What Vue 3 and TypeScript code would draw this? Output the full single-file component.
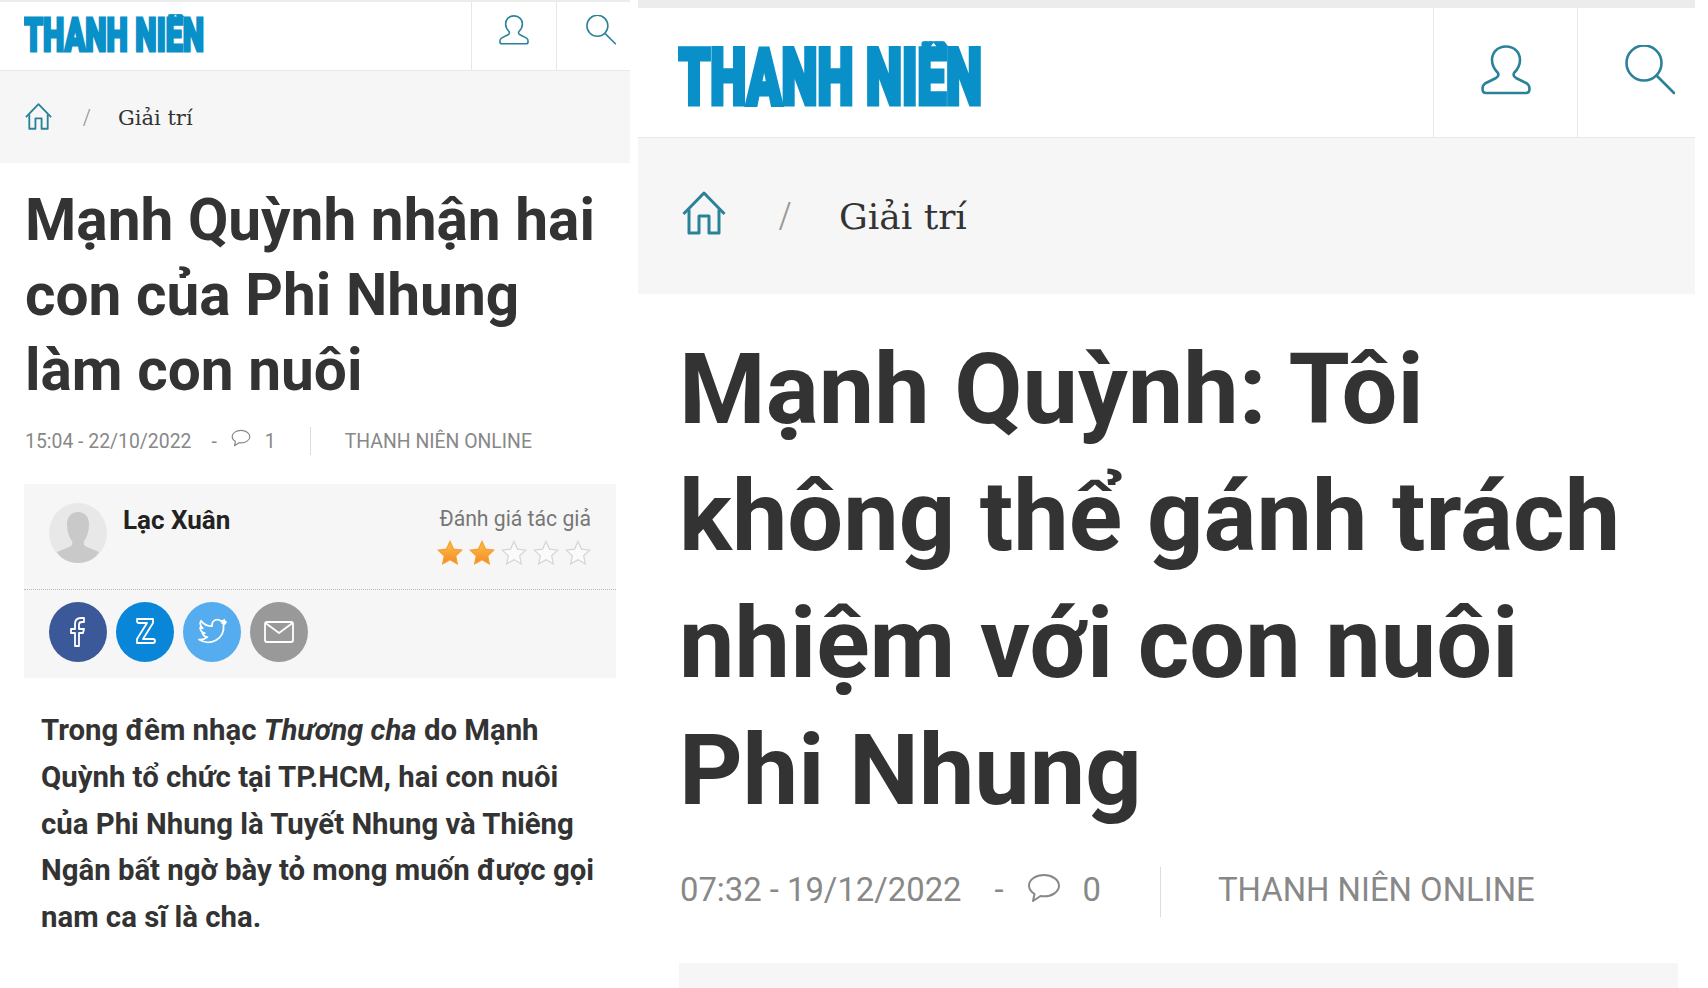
<template>
  <div class="page">
    <!-- bài bên trái -->
    <section class="panel small">
      <header class="topbar">
        <svg class="logo" viewBox="0 0 420 110" preserveAspectRatio="none" aria-label="Thanh Niên">
          <text x="0" y="87" textLength="420" lengthAdjust="spacingAndGlyphs">THANH NIÊN</text>
        </svg>
        <a class="tool"><svg viewBox="0 0 50 50"><use href="#icon-user" /></svg></a>
        <a class="tool"><svg viewBox="0 0 50 50"><use href="#icon-search" /></svg></a>
      </header>
      <nav class="crumb">
        <svg class="home" viewBox="0 0 44 44"><use href="#icon-home" /></svg>
        <span class="slash">/</span>
        <span class="crumb-text">Giải trí</span>
      </nav>
      <div class="content">
        <h1>Mạnh Quỳnh nhận hai con của Phi Nhung làm con nuôi</h1>
        <div class="meta">
          <span>15:04 - 22/10/2022</span>
          <span class="dash">-</span>
          <svg class="bubble" viewBox="0 0 34 30"><use href="#icon-bubble" /></svg>
          <span class="count">1</span>
          <i class="sep"></i>
          <span>THANH NIÊN ONLINE</span>
        </div>
        <div class="author-box">
          <div class="author">
            <svg class="avatar" viewBox="0 0 58 60">
              <ellipse cx="29" cy="30" rx="29" ry="30" fill="#e8e8e8" />
              <path d="M29 9c-7 0-11 5-11 12 0 7 2 13 5 17 1 3 0 5-3 6l-12 5c4 7 12 11 21 11s17-4 21-11l-12-5c-3-1-4-3-3-6 3-4 5-10 5-17 0-7-4-12-11-12z" fill="#c9c9c9" />
            </svg>
            <span class="author-name">Lạc Xuân</span>
            <div class="rating">
              <span class="rating-label">Đánh giá tác giả</span>
              <div class="stars">
                <svg v-for="n in 5" :key="n" viewBox="0 0 26 26">
                  <path
                    d="M13 1.500l3.500 7.600 8.300 1-6.100 5.600 1.600 8.200-7.300-4.100-7.300 4.100 1.600-8.200L1.200 10.100l8.300-1z"
                    :fill="n <= 2 ? 'url(#star-fill)' : '#fbfbfb'"
                    :stroke="n <= 2 ? '#f5a030' : '#d4d4d4'"
                    stroke-width="1.2"
                  />
                </svg>
              </div>
            </div>
          </div>
          <div class="share">
            <a v-for="s in shares" :key="s.name" class="share-btn" :style="{ background: s.color }">
              <svg viewBox="0 0 58 60" fill="none" stroke="#fff" stroke-width="1.8" stroke-linejoin="round">
                <path :d="s.path" />
              </svg>
            </a>
          </div>
        </div>
        <p class="lede">Trong đêm nhạc <em>Thương cha</em> do Mạnh Quỳnh tổ chức tại TP.HCM, hai con nuôi của Phi Nhung là Tuyết Nhung và Thiêng Ngân bất ngờ bày tỏ mong muốn được gọi nam ca sĩ là cha.</p>
      </div>
    </section>

    <!-- bài bên phải -->
    <section class="panel large">
      <header class="topbar">
        <svg class="logo" viewBox="0 0 420 110" preserveAspectRatio="none" aria-label="Thanh Niên">
          <text x="0" y="87" textLength="420" lengthAdjust="spacingAndGlyphs">THANH NIÊN</text>
        </svg>
        <a class="tool"><svg viewBox="0 0 50 50"><use href="#icon-user" /></svg></a>
        <a class="tool"><svg viewBox="0 0 50 50"><use href="#icon-search" /></svg></a>
      </header>
      <nav class="crumb">
        <svg class="home" viewBox="0 0 44 44"><use href="#icon-home" /></svg>
        <span class="slash">/</span>
        <span class="crumb-text">Giải trí</span>
      </nav>
      <div class="content">
        <h1>Mạnh Quỳnh: Tôi không thể gánh trách nhiệm với con nuôi Phi Nhung</h1>
        <div class="meta">
          <span>07:32 - 19/12/2022</span>
          <span class="dash">-</span>
          <svg class="bubble" viewBox="0 0 34 30"><use href="#icon-bubble" /></svg>
          <span class="count">0</span>
          <i class="sep"></i>
          <span>THANH NIÊN ONLINE</span>
        </div>
        <div class="author-box"></div>
      </div>
    </section>

    <svg class="defs" width="0" height="0">
      <defs>
        <linearGradient id="star-fill" x1="0" y1="0" x2="0" y2="1">
          <stop offset="0" stop-color="#fcc04a" />
          <stop offset="1" stop-color="#f58a25" />
        </linearGradient>
        <g id="icon-user" fill="none" stroke="#2a8299" stroke-width="2.6" stroke-linejoin="round">
          <path d="M25 1.500C16 1.500 11 8 11 15c0 6 3 10 6 13 1 2 .5 3.500-2 5L4 38.500C2 40 1.500 42 1.500 44c0 3 1.500 4 3.500 4h40c2 0 3.500-1 3.500-4 0-2-.5-4-2.500-5.500L35 33c-2.500-1.500-3-3-2-5 3-3 6-7 6-13 0-7-5-13.500-14-13.500z" />
        </g>
        <g id="icon-search" fill="none" stroke="#2a8299" stroke-width="2.6" stroke-linecap="round">
          <circle cx="19" cy="18" r="17.500" />
          <path d="M32 31l17 17" />
        </g>
        <g id="icon-home" fill="none" stroke="#2a8299" stroke-width="3" stroke-linejoin="round">
          <path d="M1.500 23L22 2l20.500 21" />
          <path d="M7 18.500V42h10V25h10v17h10V18.500" />
        </g>
        <path id="icon-bubble" fill="none" stroke="#888" stroke-width="2" stroke-linejoin="round" d="M17 2C9 2 2 6.500 2 12.500c0 3.500 2.500 6.500 5.500 8.500L6 28l7.500-5c1 .2 2.300.3 3.500.3 8 0 15-4.500 15-10.500S25 2 17 2z" />
      </defs>
    </svg>
  </div>
</template>

<script setup lang="ts">
interface ShareButton {
  name: string
  color: string
  path: string
}

const shares: ShareButton[] = [
  {
    name: 'facebook',
    color: '#3b5998',
    path: 'M26 44V31h-4v-4h4v-5c0-4 2-6 6-6h3v4h-2c-2 0-3 1-3 2.500V27h5l-1 4h-4v13z',
  },
  {
    name: 'zalo',
    color: '#0a86d8',
    path: 'M21 17h16v4L27 37h10c1.500 0 2 1 2 2s-.5 2-2 2H21v-4l10-16H23c-1.500 0-2-.8-2-2s.5-2 0-2z',
  },
  {
    name: 'twitter',
    color: '#55acee',
    path: 'M42 20c-1 .6-2 1-3 1 1-.7 2-2 2.500-3-1 .6-2.500 1-3.500 1.200-3-3-9-1.500-9 4v1c-4.500 0-8.500-2-11-5.500-1.500 2.500-.5 6 1.800 7.500-1 0-1.800-.3-2.600-.7 0 3 2 5 4.500 5.700-.8.200-1.600.2-2.300.1.800 2.200 2.800 3.700 5 3.800-2.500 2-5.500 2.900-8.400 2.500 11 7 26-.5 24.500-14.800 1-.8 1.800-1.700 2.500-2.800z',
  },
  {
    name: 'email',
    color: '#999999',
    path: 'M17 20h24c1 0 2 1 2 2v16c0 1-1 2-2 2H17c-1 0-2-1-2-2V22c0-1 1-2 2-2zM15.500 21L29 31l13.500-10',
  },
]
</script>

<style scoped>
.page {
  display: grid;
  grid-template-columns: 630px 1057px;
  column-gap: 8px;
  align-items: start;
  width: 1708px;
  height: 988px;
  overflow: hidden;
  background: #fff;
  font-family: Roboto, "Liberation Sans", sans-serif;
}

.page * {
  box-sizing: border-box;
}

.panel {
  overflow: hidden;
  height: 988px;
  background: #fff;
}

.small { border-top: 2px solid #ececec; }
.large { border-top: 8px solid #ececec; }

.topbar {
  display: flex;
  align-items: stretch;
  border-bottom: 1px solid #e8e8e8;
}

.small .topbar { height: 69px; padding-left: 24px; }
.large .topbar { height: 130px; padding-left: 40px; }

.logo {
  display: block;
  margin-right: auto;
  align-self: flex-start;
  clip-path: inset(22% 0 0 0);
}

.small .logo { width: 180px; height: 65px; margin-top: -2px; }
.large .logo { width: 304px; height: 110px; margin-top: 9px; }

.logo text {
  font-family: Roboto, "Liberation Sans", sans-serif;
  font-size: 78px;
  font-weight: 900;
  fill: #0a90c8;
  stroke: #0a90c8;
  stroke-width: 5px;
}

.tool {
  display: flex;
  justify-content: center;
  border-left: 1px solid #e8e8e8;
}

.small .tool { width: 85px; padding-top: 13px; }
.small .tool:last-child { width: 74px; padding-left: 14px; }
.large .tool { width: 144px; padding-top: 37px; }
.large .tool:last-child { width: 118px; padding-left: 26px; }

.small .tool svg { width: 30px; height: 30px; }
.large .tool svg { width: 50px; height: 50px; }

.crumb {
  display: flex;
  align-items: center;
  background: #f6f6f6;
}

.small .crumb { height: 92px; padding-left: 25px; padding-top: 1px; }
.large .crumb { height: 156px; padding-left: 44px; }

.small .home { width: 27px; height: 27px; margin-top: -2px; }
.large .home { width: 44px; height: 44px; margin-top: -6px; }

.slash {
  color: #999;
  font-family: "Liberation Serif", serif;
}

.small .slash { font-size: 26px; margin-left: 31px; width: 35px; }
.large .slash { font-size: 42px; margin-left: 53px; width: 60px; }

.crumb-text {
  color: #333;
  font-family: "DejaVu Serif", "Liberation Serif", serif;
}

.small .crumb-text { font-size: 21px; }
.large .crumb-text { font-size: 36px; }

.small .content { padding: 20px 14px 0 25px; }
.large .content { padding: 32px 17px 0 43px; }

h1 {
  margin: 0;
  color: #333;
  font-weight: 700;
}

.small h1 { font-size: 58.6px; line-height: 75px; }
.large h1 { font-size: 99px; line-height: 127px; margin: 0 10px 0 -2px; }

.meta {
  display: flex;
  align-items: center;
  color: #888;
}

.small .meta { height: 28px; margin-top: 19px; font-size: 19.4px; }
.large .meta { height: 50px; margin-top: 33px; font-size: 32.8px; margin-left: -1px; }

.large .meta span { margin-bottom: 4px; }

.small .dash { margin-left: 20px; }
.large .dash { margin-left: 33px; }

.small .bubble { width: 20px; height: 18px; margin: -6px 0 0 14px; }
.large .bubble { width: 34px; height: 30px; margin: -8px 0 0 23px; }

.small .count { margin-left: 14px; }
.large .count { margin-left: 22px; }

.sep {
  display: block;
  align-self: stretch;
  width: 1px;
  background: #ddd;
}

.small .sep { margin: 0 34px 0 34px; }
.large .sep { margin: 0 57px 0 59px; }

.author-box { background: #f6f6f6; }

.small .author-box { margin-top: 29px; margin-left: -1px; }
.large .author-box { margin-top: 46px; margin-left: -2px; height: 60px; }

.author {
  display: flex;
  align-items: flex-start;
  height: 106px;
  padding: 19px 25px 0 25px;
  border-bottom: 1px dotted #bbb;
}

.avatar {
  width: 58px;
  height: 60px;
  flex: none;
}

.author-name {
  margin: 2px auto 0 16px;
  color: #222;
  font-size: 26px;
  font-weight: 700;
}

.rating {
  display: flex;
  flex-direction: column;
  align-items: flex-end;
}

.rating-label {
  margin-top: 3px;
  color: #777;
  font-size: 21.2px;
}

.stars {
  display: flex;
  gap: 6px;
  margin-top: 9px;
}

.stars svg {
  width: 26px;
  height: 26px;
}

.share {
  display: flex;
  gap: 9px;
  padding: 12px 0 16px 25px;
}

.share-btn {
  display: block;
  width: 58px;
  height: 60px;
  border-radius: 50%;
}

.share-btn svg {
  display: block;
  width: 100%;
  height: 100%;
}

.lede {
  margin: 29px 14px 0 16px;
  color: #333;
  font-size: 29.35px;
  font-weight: 700;
  line-height: 46.8px;
}

.defs { position: absolute; }
</style>

<style>
html, body {
  margin: 0;
  background: #fff;
}
</style>
